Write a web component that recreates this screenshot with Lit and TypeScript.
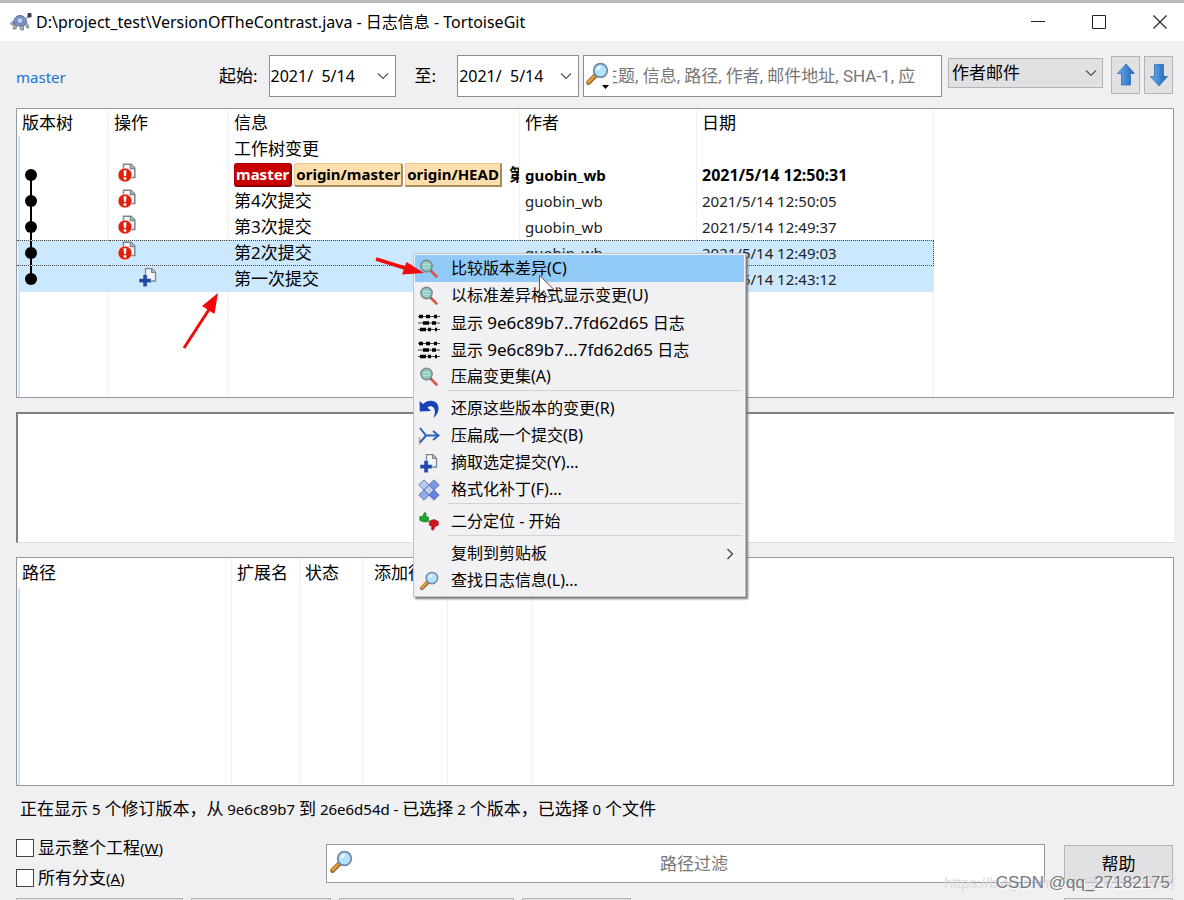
import { LitElement, html, svg, css, nothing } from "lit";
import { customElement } from "lit/decorators.js";
import { classMap } from "lit/directives/class-map.js";

/* ---------- icons ---------- */

const modifiedIcon = html`<svg width="20" height="20" viewBox="0 0 20 20" aria-hidden="true">
  <path d="M6.500 1.200h7.500l3.800 3.800v9.500H6.500z" fill="#f6f7f8" stroke="#7b8790" stroke-width="1.500" />
  <path d="M13.300 1v4.700H18" fill="#a9b2ba" stroke="#7b8790" stroke-width="1.200" />
  <circle cx="8" cy="12" r="7" fill="#e0200c" stroke="#fff" stroke-width=".6" />
  <path d="M6.500 7.200h3L9 13H7z" fill="#fff" />
  <rect x="6.700" y="14.200" width="2.600" height="2.500" fill="#fff" />
</svg>`;

const addedIcon = html`<svg width="20" height="20" viewBox="0 0 20 20" aria-hidden="true">
  <path d="M7.500 1.700h6.500l3.500 3.500v8.800H7.500z" fill="#f3f5f9" stroke="#7b8790" stroke-width="1.300" />
  <path d="M13.500 1.500v4H17.800" fill="#a9b2ba" stroke="#7b8790" stroke-width="1" />
  <path d="M5 7.500h4.200v4h4v4.200h-4v4H5v-4H1v-4.200h4z" fill="#1f49a8" stroke="#f4f6fb" stroke-width=".5" />
</svg>`;

const diffIcon = html`<svg width="20" height="20" viewBox="0 0 20 20" aria-hidden="true">
  <path d="M12 12l5.500 5.500" stroke="#dd5444" stroke-width="2.600" stroke-linecap="round" />
  <path d="M11 11l2 2" stroke="#6c6f72" stroke-width="2" />
  <circle cx="7.500" cy="7" r="5.600" fill="#93cdc6" stroke="#7f8a8c" stroke-width="1.600" />
  <path d="M4 5.500h7M4 8.500h7" stroke="#b6e2dc" stroke-width="1" />
</svg>`;

const findIcon = html`<svg class="find" width="24" height="24" viewBox="0 0 24 24" aria-hidden="true">
  <path d="M10.500 13.500L3.500 20.500" stroke="#8d6a35" stroke-width="4.800" stroke-linecap="round" />
  <path d="M9.800 13.700L3.500 20" stroke="#e59a3c" stroke-width="2.800" stroke-linecap="round" />
  <path d="M11.500 12.500l-1.500 1.500" stroke="#666d78" stroke-width="3.500" />
  <circle cx="15.500" cy="8.500" r="6.800" fill="#b5e2f8" stroke="#7189a3" stroke-width="1.800" />
  <path d="M11.500 8a4 4 0 0 1 5-3.600c-1 2.500-2.500 3.600-5 3.600z" fill="#edfaff" />
</svg>`;

const logIcon = html`<svg width="22" height="20" viewBox="0 0 22 20" aria-hidden="true">
  <path d="M0 3.500h22M0 10h22M0 16.500h22" stroke="#444" stroke-width="1.200" />
  <path d="M1 3.500h4M8 3.500h4M16 3.500h3M5 10h6M14 10h4M2 16.500h6M10 16.500h3M17 16.500h2" stroke="#000" stroke-width="3.400" />
</svg>`;

const revertIcon = html`<svg width="20" height="20" viewBox="0 0 20 20" aria-hidden="true">
  <path d="M.5 2l3.500 3C8 .8 15 .5 18 4.500c3 4.500 1.500 10-3.500 14.500 1.500-4 2-7.500.3-10-1.700-2.300-4.300-2-6.300-.5L12 12 .8 12.500z" fill="#1c41b4" />
</svg>`;

const squashIcon = html`<svg width="22" height="20" viewBox="0 0 22 20" aria-hidden="true">
  <path d="M1.500 11v8" stroke="#ee9a9a" stroke-width="1.500" />
  <path d="M2 2l6 7.500h12M2 16.500l6-7" fill="none" stroke="#2a63bd" stroke-width="2" />
  <path d="M15 5l5.500 4.500L15 14" fill="none" stroke="#2a63bd" stroke-width="2" />
</svg>`;

const patchIcon = html`<svg width="22" height="22" viewBox="0 0 22 22" aria-hidden="true">
  <g stroke="#5b72ad" stroke-width=".9">
    <path d="M6 .8L11.200 6 6 11.200.8 6z" fill="#b8caf1" />
    <path d="M16 .8L21.200 6 16 11.200 10.800 6z" fill="#7c9ae4" />
    <path d="M6 10.800l5.200 5.200L6 21.200.8 16z" fill="#91abea" />
    <path d="M16 10.800l5.200 5.200-5.200 5.200-5.200-5.200z" fill="#5f83df" />
    <path d="M11 5.800l5.200 5.200-5.200 5.200L5.800 11z" fill="#a2b8ee" />
  </g>
  <path d="M11 8.500v1.500M11 12v1.500M8.500 11h1.500M12 11h1.500" stroke="#eef3ff" stroke-width="1.300" />
</svg>`;

const bisectIcon = html`<svg width="20" height="20" viewBox="0 0 20 20" aria-hidden="true">
  <path d="M.8 4.500h2.700L5.500.5l1.700.8-.4 3 2.700 1v4.200L5 10 .8 8.500z" fill="#1fa52b" stroke="#0d6e17" stroke-width=".6" />
  <path d="M10.500 9l4.500-1.500 4.300 2v3.800l-3 .9-2 4-1.800-.7.3-3.300-2.500-1z" fill="#d3141c" stroke="#8d0c12" stroke-width=".6" />
</svg>`;

const turtleIcon = html`<svg width="22" height="18" viewBox="0 0 22 18" aria-hidden="true">
  <path d="M4 12l-1 4h3l1-3M10 13l.5 4h3l0-4M15 12l2 3h2l-1-4" fill="#a6afb9" stroke="#69727e" stroke-width=".7" />
  <ellipse cx="3" cy="10.500" rx="2.500" ry="1.800" fill="#aab3be" stroke="#727b87" stroke-width=".6" />
  <path d="M3.500 11C3.500 5.500 6 2.500 10 2.500s6.500 3 7 8c-3 3-10.500 3.300-13.500.5z" fill="#7f95cb" stroke="#4b5c88" stroke-width=".8" />
  <path d="M7 6l3-1.500L13 6v3l-3 1.500L7 9z" fill="#c3d0ee" stroke="#4c619a" stroke-width=".6" />
  <path d="M10 4.500v-2M13 9l3 1.500M7 9l-3 1.500" stroke="#4c619a" stroke-width=".6" />
  <path d="M15.500 6l3.500-3" stroke="#8d97a4" stroke-width="1.200" />
  <rect x="17.500" y="0" width="4" height="4.500" rx="1" fill="#2a3d54" />
</svg>`;

const chevron = html`<svg class="chevron" width="12" height="8" viewBox="0 0 12 8" aria-hidden="true">
  <path d="M1 1.500l5 5 5-5" fill="none" stroke="#555" stroke-width="1.200" />
</svg>`;

const arrow = (up: boolean) => html`<svg width="20" height="24" viewBox="0 0 20 24" aria-hidden="true">
  <defs><linearGradient id="blue" x1="0" x2="1"><stop offset="0" stop-color="#69b0ee" /><stop offset="1" stop-color="#1f61b5" /></linearGradient></defs>
  ${up
    ? svg`<path d="M10 1l8.500 9.500H14.500V22h-9V10.500H1.500z" fill="url(#blue)" stroke="#2f6db5" stroke-width=".8" />`
    : svg`<path d="M10 23l8.500-9.500H14.500V1.500h-9v12H1.500z" fill="url(#blue)" stroke="#2f6db5" stroke-width=".8" />`}
</svg>`;

/* ---------- data ---------- */

type Place = "start" | "middle" | "end";

interface Commit {
  message: string;
  author: string;
  date: string;
  action: "modified" | "added";
  place: Place;
  head?: boolean;
  selected?: boolean;
  focused?: boolean;
}

const commits: Commit[] = [
  { message: "第5次提交", author: "guobin_wb", date: "2021/5/14 12:50:31", action: "modified", place: "start", head: true },
  { message: "第4次提交", author: "guobin_wb", date: "2021/5/14 12:50:05", action: "modified", place: "middle" },
  { message: "第3次提交", author: "guobin_wb", date: "2021/5/14 12:49:37", action: "modified", place: "middle" },
  { message: "第2次提交", author: "guobin_wb", date: "2021/5/14 12:49:03", action: "modified", place: "middle", selected: true, focused: true },
  { message: "第一次提交", author: "guobin_wb", date: "2021/5/14 12:43:12", action: "added", place: "end", selected: true },
];

const menuGroups = [
  [
    { icon: diffIcon, label: html`比较版本差异(C)`, hot: true },
    { icon: diffIcon, label: html`以标准差异格式显示变更(U)` },
    { icon: logIcon, label: html`显示 <span class="hash">9e6c89b7..7fd62d65</span> 日志` },
    { icon: logIcon, label: html`显示 <span class="hash">9e6c89b7...7fd62d65</span> 日志` },
    { icon: diffIcon, label: html`压扁变更集(A)` },
  ],
  [
    { icon: revertIcon, label: html`还原这些版本的变更(R)` },
    { icon: squashIcon, label: html`压扁成一个提交(B)` },
    { icon: addedIcon, label: html`摘取选定提交(Y)...` },
    { icon: patchIcon, label: html`格式化补丁(F)...` },
  ],
  [{ icon: bisectIcon, label: html`二分定位 - 开始` }],
  [
    { icon: nothing, label: html`复制到剪贴板`, submenu: true },
    { icon: findIcon, label: html`查找日志信息(L)...` },
  ],
] as { icon: unknown; label: unknown; hot?: boolean; submenu?: boolean }[][];

/** Wraps the Latin runs of a mixed string so that they can be set a little smaller. */
const mixed = (text: string) =>
  text.split(/([\x20-\x7e]+)/).map((part) => (/^[\x20-\x7e]+$/.test(part) ? html`<span class="latin">${part}</span>` : part));

@customElement("app-root")
export class AppRoot extends LitElement {
  static styles = css`
    :host {
      display: flex;
      flex-direction: column;
      position: relative;
      height: 100vh;
      overflow: hidden;
      background: #f0eff1;
      color: #000;
      font-family: "Noto Sans", "Noto Sans CJK SC", sans-serif;
      font-size: 17px;
      line-height: 24px;
    }
    * { box-sizing: border-box; }
    button, input, select, textarea {
      font: inherit;
      color: inherit;
      margin: 0;
      padding: 0;
      border-radius: 0;
      outline: none;
    }
    svg { display: block; flex: none; }
    .latin { font-size: 15px; white-space: pre-wrap; }
    .hash { font-size: 17px; }

    .titlebar {
      flex: none;
      display: flex;
      align-items: center;
      height: 41px;
      padding-left: 10px;
      background: #fff;
      border-top: 3px solid #b9b9b9;
      font-size: 16px;
    }
    .titlebar h1 { flex: 1; margin: 0 0 0 4px; font-size: 16px; font-weight: 400; white-space: nowrap; }
    .window-button {
      display: grid;
      place-items: center;
      width: 61px;
      height: 36px;
      border: 0;
      background: none;
    }
    .window-button:last-child { width: 48px; margin-left: 7px; }

    .toolbar {
      flex: none;
      display: flex;
      align-items: flex-start;
      padding: 14px 11px 9px 16px;
    }
    .branch { width: 203px; color: #1874cd; font-size: 15px; line-height: 44px; text-decoration: none; }
    .toolbar label { line-height: 42px; white-space: nowrap; font-size: 17px; }
    .date {
      display: flex;
      align-items: center;
      width: 127px;
      height: 42px;
      margin: 0 19px 0 11px;
      border: 1px solid #8b8b90;
      background: #fff;
    }
    .date.until { width: 122px; margin: 0 4px 0 21px; }
    .date input { flex: 1; min-width: 0; padding-left: 1px; border: 0; background: none; font-size: 16px; }
    .date button { display: grid; place-items: center; width: 24px; height: 38px; border: 0; background: none; }
    .search {
      flex: 1;
      display: flex;
      align-items: center;
      height: 42px;
      border: 1px solid #8b8b90;
      background: #fff;
      overflow: hidden;
    }
    .search-icon {
      z-index: 1;
      display: flex;
      align-items: flex-end;
      flex: none;
      width: 29px;
      height: 32px;
      margin-right: -12px;
      padding: 0 0 6px 1px;
      border: 0;
      background: #fff;
    }
    .search-icon .caret { margin: 0 0 -3px -7px; }
    .search input { flex: 1; min-width: 0; border: 0; background: none; font-family: Roboto, "Noto Sans CJK SC", sans-serif; }
    ::placeholder { color: #767676; opacity: 1; }
    .combo { display: grid; align-items: center; width: 155px; margin: 3px 8px 0 6px; }
    .combo select {
      grid-area: 1 / 1;
      height: 30px;
      padding-left: 3px;
      appearance: none;
      border: 1px solid #b4b4b6;
      background: #e1e0e2;
    }
    .combo .chevron { grid-area: 1 / 1; justify-self: end; margin-right: 6px; pointer-events: none; }
    .step {
      display: grid;
      place-items: center;
      width: 29px;
      height: 38px;
      margin-top: 1px;
      border: 1px solid #b4b4b6;
      background: #e1e0e2;
    }
    .step + .step { margin-left: 4px; }

    .panel {
      flex: none;
      margin: 0 10px 0 16px;
      border: 1px solid #98989c;
      background: #fff;
      overflow: hidden;
    }
    .log { height: 290px; }
    .files { height: 229px; }
    .message {
      flex: none;
      display: block;
      height: 131px;
      margin: 14px 10px 14px 16px;
      border: solid #808084;
      border-width: 2px 0 1px 2px;
      border-bottom-color: #dcdcdf;
      background: #fff;
      resize: none;
    }
    table { width: 100%; height: 100%; table-layout: fixed; border-collapse: separate; border-spacing: 0; }
    th, td {
      padding: 0 0 0 5px;
      border-right: 1px solid #f0f0f3;
      font-weight: 400;
      text-align: left;
      white-space: nowrap;
      overflow: hidden;
    }
    th:last-child, td:last-child { border-right: 0; }
    .log th { height: 27px; }
    .files th { height: 30px; }
    .files th.number { padding-right: 5px; text-align: right; }
    .log td { height: 26px; }
    .log .filler td, .files .filler td { height: auto; }
    tbody td:first-child { box-shadow: inset 1px 0 #fff, inset 3px 0 #cfe5fb; }
    .author, .when { font-size: 15px; color: #222; }
    .head .author, .head .when { font-weight: 700; color: #000; }
    .head .when { font-size: 16px; }
    .selected td { background: #cce8ff; border-right-color: #cce8ff; }
    .selected td:last-child { background: #fff; }
    .focused td { border-top: 1px dotted #444; border-bottom: 1px dotted #444; }
    .focused td:last-child { border-color: #fff; border-style: solid; }
    .focused .when { border-right: 1px dotted #444; }
    .log td.graph { padding: 0; }
    .focused .graph svg { margin: -1px 0; }
    .log td.action { padding: 0 0 4px 8px; }
    .log td.action.added { padding-left: 29px; }
    .refs { display: flex; align-items: center; gap: 2px; font-weight: 700; }
    .ref {
      flex: none;
      height: 24px;
      padding: 0 1px;
      border: 1px solid #eec48a;
      border-right: 2px solid #a98b60;
      border-bottom: 2px solid #a98b60;
      border-radius: 3px;
      background: #ffdead;
      font-size: 15px;
      line-height: 21px;
    }
    .ref.current { border-color: #b00000 #8c0000 #8c0000 #b00000; background: #c80000; color: #fff; }
    .ref.symbolic { border-radius: 0; }
    .refs .text { margin-left: 5px; }

    .footer {
      flex: none;
      display: grid;
      grid-template-columns: 310px 1fr 109px;
      padding: 0 11px 0 16px;
    }
    .status { grid-column: 1 / -1; margin: 0; padding-left: 4px; line-height: 46px; }
    .checks { display: flex; flex-direction: column; padding-top: 1px; }
    .checks label { display: flex; align-items: center; gap: 4px; height: 30px; }
    .checks input { appearance: none; width: 18px; height: 18px; border: 1px solid #444; background: #fff; }
    .path-filter {
      display: flex;
      align-items: center;
      height: 39px;
      margin: 12px 19px 0 0;
      border: 1px solid #98989c;
      background: #fff;
    }
    .path-filter .find { margin: 0 0 4px 2px; }
    .path-filter input { flex: 1; min-width: 0; padding-right: 9px; border: 0; background: none; text-align: center; }
    .push {
      height: 38px;
      border: 1px solid #b4b4b6;
      background: #e1e0e2;
    }
    .help { margin-top: 13px; }
    .actions { grid-column: 1 / -1; display: flex; gap: 8px; margin-top: 5px; }
    .actions .push { width: 109px; }
    .actions .wide { width: 167px; }
    .actions .mid { width: 140px; }
    .actions .walk { width: 175px; }
    .actions .push:last-child { margin-left: auto; }

    .menu {
      position: absolute;
      left: 413px;
      top: 253px;
      width: 333px;
      padding: 1px 0 2px;
      border: 1px solid #c4c4c6;
      background: #f1f0f2;
      box-shadow: 2px 2px 2px #77777a;
      font-size: 16px;
    }
    .group + .group::before { content: ""; display: block; height: 4px; margin: 0 3px 0 34px; border-top: 1px solid #d2d2d5; }
    .item {
      display: grid;
      grid-template-columns: 28px 1fr 24px;
      align-items: center;
      column-gap: 8px;
      width: 329px;
      height: 27px;
      margin-left: 1px;
      border: 0;
      background: none;
      text-align: left;
      white-space: nowrap;
    }
    .item.hot { background: #91c9f7; }
    .item > svg { justify-self: center; }
    .item .find { width: 20px; height: 20px; }
    .item .label { grid-column: 2; line-height: 27px; }
    .item .more { justify-self: start; margin-left: 6px; }

    .annotations { position: absolute; left: 176px; top: 250px; pointer-events: none; }
    .watermark {
      position: absolute;
      right: 14px;
      bottom: 5px;
      color: #77777b;
      font-family: "Liberation Sans", sans-serif;
      font-size: 17px;
      text-shadow: 1px 1px #fff;
      pointer-events: none;
    }
    .watermark.faint { right: 8px; color: #dcdbde; font-family: "Liberation Sans", "Noto Sans CJK SC", sans-serif; font-size: 15px; text-shadow: none; }
  `;

  private graph(place: Place) {
    const from = place === "start" ? 13 : 0;
    const to = place === "end" ? 13 : 26;
    return html`<svg width="30" height="26" viewBox="0 0 30 26" aria-hidden="true">
      <path d="M14 ${from}V${to}" stroke="#000" stroke-width="2" /><circle cx="14" cy="13" r="6" />
    </svg>`;
  }

  private commitRow(c: Commit) {
    return html`<tr class=${classMap({ head: !!c.head, selected: !!c.selected, focused: !!c.focused })}>
      <td class="graph">${this.graph(c.place)}</td>
      <td class="action ${c.action}">${c.action === "added" ? addedIcon : modifiedIcon}</td>
      <td class="subject">
        ${c.head
          ? html`<div class="refs"><span class="ref current">master</span><span class="ref">origin/master</span><span class="ref symbolic">origin/HEAD</span><span class="text">${c.message}</span></div>`
          : c.message}
      </td>
      <td class="author">${c.author}</td>
      <td class="when">${c.date}</td>
      <td></td>
    </tr>`;
  }

  render() {
    return html`
      <header class="titlebar">
        ${turtleIcon}
        <h1>D:\\project_test\\VersionOfTheContrast.java - 日志信息 - TortoiseGit</h1>
        <button class="window-button" aria-label="最小化"><svg width="14" height="14" viewBox="0 0 14 14"><path d="M0 6.500h14" stroke="#222" /></svg></button>
        <button class="window-button" aria-label="最大化"><svg width="14" height="14" viewBox="0 0 14 14"><path d="M.5.5h13v13H.5z" fill="none" stroke="#222" /></svg></button>
        <button class="window-button" aria-label="关闭"><svg width="14" height="14" viewBox="0 0 14 14"><path d="M.5.5l13 13M13.500.5l-13 13" stroke="#222" stroke-width="1.100" /></svg></button>
      </header>

      <div class="toolbar">
        <a class="branch" href="#master">master</a>
        <label for="from">起始:</label>
        <div class="date">
          <input id="from" type="text" value="2021/  5/14" />
          <button aria-label="选择起始日期">${chevron}</button>
        </div>
        <label for="to">至:</label>
        <div class="date until">
          <input id="to" type="text" value="2021/  5/14" />
          <button aria-label="选择结束日期">${chevron}</button>
        </div>
        <div class="search">
          <button class="search-icon" aria-label="搜索选项">
            ${findIcon}<svg class="caret" width="7" height="4" viewBox="0 0 7 4"><path d="M0 0h7L3.500 4z" /></svg>
          </button>
          <input type="text" aria-label="搜索" placeholder="主题, 信息, 路径, 作者, 邮件地址, SHA-1, 应" />
        </div>
        <div class="combo">
          <select aria-label="显示方式"><option>作者邮件</option></select>
          ${chevron}
        </div>
        <button class="step" aria-label="上一个">${arrow(true)}</button>
        <button class="step" aria-label="下一个">${arrow(false)}</button>
      </div>

      <div class="panel log">
        <table>
          <colgroup><col width="92" /><col width="120" /><col width="291" /><col width="177" /><col width="237" /><col /></colgroup>
          <thead><tr><th>版本树</th><th>操作</th><th>信息</th><th>作者</th><th>日期</th><th></th></tr></thead>
          <tbody>
            <tr><td class="graph"></td><td></td><td class="subject">工作树变更</td><td></td><td></td><td></td></tr>
            ${commits.map((c) => this.commitRow(c))}
            <tr class="filler"><td></td><td></td><td></td><td></td><td></td><td></td></tr>
          </tbody>
        </table>
      </div>

      <textarea class="message" aria-label="提交信息" readonly></textarea>

      <div class="panel files">
        <table>
          <colgroup><col width="215" /><col width="68" /><col width="63" /><col width="85" /><col width="84" /><col /></colgroup>
          <thead><tr><th>路径</th><th>扩展名</th><th>状态</th><th class="number">添加行数</th><th></th><th></th></tr></thead>
          <tbody><tr class="filler"><td></td><td></td><td></td><td></td><td></td><td></td></tr></tbody>
        </table>
      </div>

      <footer class="footer">
        <p class="status">${mixed("正在显示 5 个修订版本，从 9e6c89b7 到 26e6d54d - 已选择 2 个版本，已选择 0 个文件")}</p>
        <div class="checks">
          <label><input type="checkbox" /><span>显示整个工程<span class="latin">(<u>W</u>)</span></span></label>
          <label><input type="checkbox" /><span>所有分支<span class="latin">(<u>A</u>)</span></span></label>
        </div>
        <div class="path-filter">
          ${findIcon}
          <input type="text" aria-label="路径过滤" placeholder="路径过滤" />
        </div>
        <button class="push help">帮助</button>
        <div class="actions">
          <button class="push wide" aria-label="显示"></button>
          <button class="push mid" aria-label="统计信息"></button>
          <button class="push walk" aria-label="遍历行为"></button>
          <button class="push" aria-label="刷新"></button>
          <button class="push" aria-label="确定"></button>
        </div>
      </footer>

      <div class="menu" role="menu">
        ${menuGroups.map(
          (group) => html`<div class="group" role="group">
            ${group.map(
              (item) => html`<button class=${classMap({ item: true, hot: !!item.hot })} role="menuitem">
                ${item.icon}<span class="label">${item.label}</span>
                ${item.submenu ? html`<svg class="more" width="8" height="12" viewBox="0 0 8 12"><path d="M1.500 1l5 5-5 5" fill="none" stroke="#444" stroke-width="1.300" /></svg>` : nothing}
              </button>`
            )}
          </div>`
        )}
      </div>

      <svg class="annotations" width="390" height="110" viewBox="176 250 390 110" aria-hidden="true">
        <path d="M376 259L408 269" stroke="#f00a0a" stroke-width="3.500" />
        <path d="M424 273l-22 1.500 4.500-12.500z" fill="#f00a0a" />
        <path d="M184 348L210 308" stroke="#f00a0a" stroke-width="3" />
        <path d="M218 293l-3.500 21-12.500-8z" fill="#f00a0a" />
        <path d="M539.500 275.500v19l4.500-4 3 7 3.500-1.500-3-6.500h6.500z" fill="#fff" stroke="#54545e" stroke-width="1" />
      </svg>
      <div class="watermark faint">https://blog.csdn.net/@51CTO博客</div>
      <div class="watermark">CSDN @qq_27182175</div>
    `;
  }
}
